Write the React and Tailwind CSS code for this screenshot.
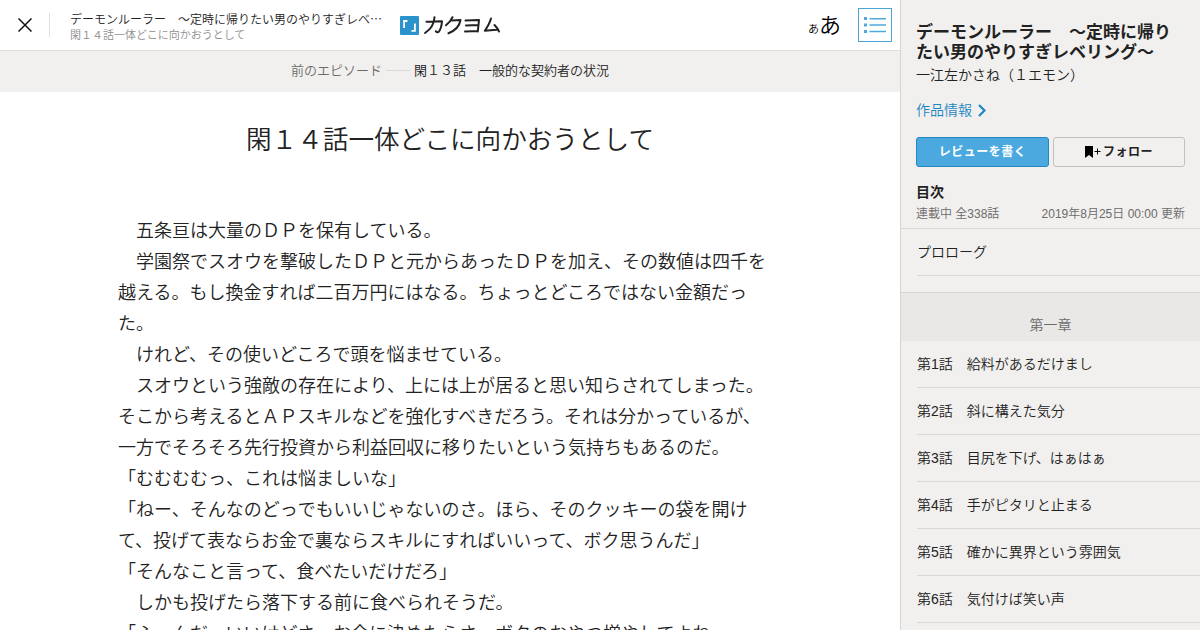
const lines = [
  '　五条亘は大量のＤＰを保有している。',
  '　学園祭でスオウを撃破したＤＰと元からあったＤＰを加え、その数値は四千を',
  '越える。もし換金すれば二百万円にはなる。ちょっとどころではない金額だっ',
  'た。',
  '　けれど、その使いどころで頭を悩ませている。',
  '　スオウという強敵の存在により、上には上が居ると思い知らされてしまった。',
  'そこから考えるとＡＰスキルなどを強化すべきだろう。それは分かっているが、',
  '一方でそろそろ先行投資から利益回収に移りたいという気持ちもあるのだ。',
  '「むむむむっ、これは悩ましいな」',
  '「ねー、そんなのどっでもいいじゃないのさ。ほら、そのクッキーの袋を開け',
  'て、投げて表ならお金で裏ならスキルにすればいいって、ボク思うんだ」',
  '「そんなこと言って、食べたいだけだろ」',
  '　しかも投げたら落下する前に食べられそうだ。',
  '「ふーんだ。いいけどさ。お金に決めたらさ、ボクのおやつ増やしてよね',
];

const episodes = [
  '第1話　給料があるだけまし',
  '第2話　斜に構えた気分',
  '第3話　目尻を下げ、はぁはぁ',
  '第4話　手がピタリと止まる',
  '第5話　確かに異界という雰囲気',
  '第6話　気付けば笑い声',
];

function Logo() {
  return (
    <svg className="ml-[18px] mt-px h-5 w-[102px] shrink-0" viewBox="0 0 102 20" fill="none">
      <rect width="19" height="19" rx="1" fill="#2b93cb" />
      <path d="M4.1 12V5H7.5M14.900 7.500V14.800H11.5" stroke="#fff" strokeWidth="1.8" />
      <g stroke="#222" strokeWidth="2" strokeLinejoin="round" strokeLinecap="round">
        <path d="M26.5 5.7L42 5.2Q41.500 12 39 15.500Q37.700 17.200 35.800 15.200M34.500 1.200Q34 11 25 17" />
        <path d="M52.500 1.200Q50.500 6 46 9.300M52 4.500L60.500 4Q59 13 48.500 17.300" />
        <path d="M65.500 4.500L79 4L77.800 15.500M66 9.500L78 9M65 15.500L78 15" />
        <path d="M91 2.500Q89.500 8 84.800 14.800L96.500 13.800M94.500 9Q97.500 12 99 15.500" />
      </g>
    </svg>
  );
}

function Header() {
  return (
    <header className="flex h-[51px] shrink-0 items-center border-b border-[#dedddb] bg-white">
      <svg className="ml-[18px] h-[14px] w-[14px] shrink-0" viewBox="0 0 14 14" stroke="#111" strokeWidth="1.5">
        <path d="M.5.5L13.500 13.500M13.500.5L.5 13.500" />
      </svg>
      <div className="ml-[17px] h-6 w-px bg-[#dfdfdf]" />
      <div className="ml-5 w-[312px] whitespace-nowrap pt-[5px]">
        <p className="text-[12px] leading-[15px] text-[#222]">デーモンルーラー　～定時に帰りたい男のやりすぎレベ⋯</p>
        <p className="text-[11px] leading-[15px] text-[#8e8e8e]">閑１４話一体どこに向かおうとして</p>
      </div>
      <Logo />
      <div className="ml-auto flex items-baseline pt-px text-black">
        <span className="text-[11px] leading-none">あ</span>
        <span className="text-[22px] leading-none">あ</span>
      </div>
      <div className="ml-[17px] mr-2 flex h-[34px] w-[34px] shrink-0 items-center justify-center border border-[#4ba5d4] bg-white">
        <svg className="h-4 w-[22px]" viewBox="0 0 22 16" fill="#4da9de">
          <path d="M0 0h3v3H0zM0 6.500h3v3H0zM0 13h3v3H0zM5.500 1h16.500v1.500H5.500zM5.500 7.300h16.500v1.500H5.500zM5.500 13.700h16.500v1.500H5.500z" />
        </svg>
      </div>
    </header>
  );
}

function Sidebar() {
  return (
    <aside className="flex h-full w-[300px] shrink-0 flex-col border-l border-[#d5d4d2] bg-[#f1f0ee] text-[#222]">
      <div className="shrink-0 pl-[15px] pr-[15px] pt-[23px]">
        <h2 className="whitespace-nowrap text-[17px] font-bold leading-5">
          デーモンルーラー　～定時に帰り
          <br />
          たい男のやりすぎレベリング～
        </h2>
        <p className="mt-[2px] text-[14px] leading-5">一江左かさね（１エモン）</p>
        <a className="mt-[15px] flex items-center text-[14px] leading-5 text-[#1c87c1]">
          作品情報
          <svg className="ml-[6px] h-[13px] w-2" viewBox="0 0 8 13" fill="none" stroke="#1c87c1" strokeWidth="2.200">
            <path d="M1 1L6.500 6.500L1 12" />
          </svg>
        </a>
        <div className="mt-[17px] flex gap-1 text-[12px] font-bold tracking-[0.5px]">
          <button className="flex h-[30px] w-[133px] items-center justify-center rounded-[3px] border border-[#2389c2] bg-[#4ba9df] text-white">
            レビューを書く
          </button>
          <button className="flex h-[30px] w-[132px] items-center justify-center rounded-[3px] border border-[#c2c1bf]">
            <svg className="mr-[2px] h-3 w-4" viewBox="0 0 16 12" fill="#000">
              <path d="M0 0H8V12L4 9L0 12ZM9.500 5H12V2.500H13V5H15.500V6H13V8.500H12V6H9.500Z" />
            </svg>
            フォロー
          </button>
        </div>
        <h3 className="mt-[15px] text-[14px] font-bold leading-5">目次</h3>
        <div className="mt-[3px] flex h-[23px] justify-between whitespace-nowrap text-[12px] leading-[19px] text-[#6b6b6b]">
          <span>連載中 全338話</span>
          <span>2019年8月25日 00:00 更新</span>
        </div>
      </div>
      <div className="h-[65px] shrink-0 border-y border-[#d9d8d6] pl-4">
        <div className="flex h-[47px] items-center border-b border-[#d9d8d6] text-[14px]">プロローグ</div>
      </div>
      <div className="flex h-12 shrink-0 items-end justify-center bg-[#e9e8e6] pb-[6px] text-[14px] leading-5 text-[#6b6b6b]">第一章</div>
      <ul className="pl-4">
        {episodes.map((e) => (
          <li key={e} className="flex h-[47px] items-center whitespace-nowrap border-b border-[#d9d8d6] text-[14px]">
            {e}
          </li>
        ))}
      </ul>
    </aside>
  );
}

export default function App() {
  return (
    <div className="flex h-[630px] w-[1200px] overflow-hidden bg-white font-['Liberation_Sans','Noto_Sans_CJK_JP',sans-serif] font-[350]" lang="ja">
      <main className="flex h-full w-[900px] shrink-0 flex-col overflow-hidden">
        <Header />
        <nav className="flex h-[41px] shrink-0 items-center justify-center bg-[#f1f0ee] pb-[2px] text-[13px]">
          <span className="text-[#6b6b6b]">前のエピソード</span>
          <span className="mx-1 mb-px h-px w-6 bg-[#d9d8d6]" />
          <span className="text-[#222]">閑１３話　一般的な契約者の状況</span>
        </nav>
        <h1 className="mt-[28px] shrink-0 text-center text-[25.6px] leading-10 text-[#222]">閑１４話一体どこに向かおうとして</h1>
        <div className="mt-[56px] shrink-0 whitespace-nowrap pl-[118px] text-[18px] leading-[31px] text-[#222]">
          {lines.map((l, i) => (
            <p key={i} className="h-[31px]">{l}</p>
          ))}
        </div>
      </main>
      <Sidebar />
    </div>
  );
}
